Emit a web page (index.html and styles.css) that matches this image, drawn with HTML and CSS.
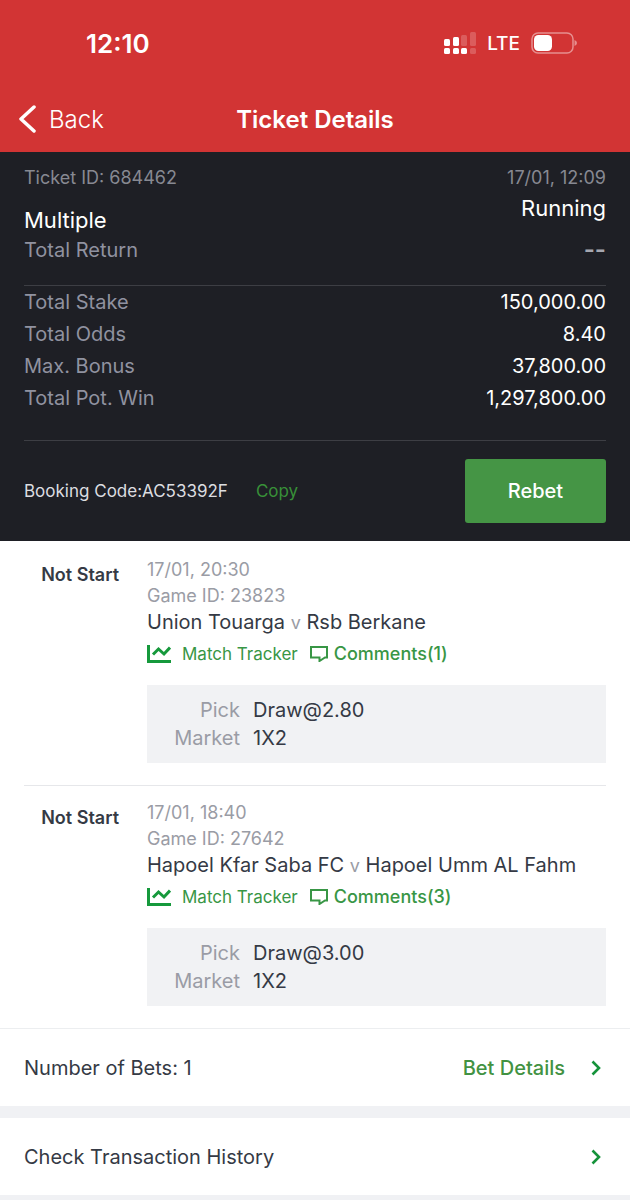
FILE: index.html
```html
<!DOCTYPE html>
<html lang="en">
<head>
<meta charset="utf-8">
<meta name="viewport" content="width=device-width, initial-scale=1">
<title>Ticket Details</title>
<link rel="stylesheet" href="styles.css">
</head>
<body>
<svg class="sprite" aria-hidden="true">
  <symbol id="chart" viewBox="0 0 24 18"><path d="M1.5 0v16.5H24M6 9.5l5.5-5.5 5.5 5 6-6.5" fill="none" stroke="currentColor" stroke-width="3"/></symbol>
  <symbol id="bubble" viewBox="0 0 18 16"><path d="M1 1h16v10.500h-2L9.500 15v-3.500H1z" fill="none" stroke="currentColor" stroke-width="2"/></symbol>
  <symbol id="chevron" viewBox="0 0 10 16"><path d="M1.500 1.500L8 8l-6.500 6.500" fill="none" stroke="currentColor" stroke-width="2.600"/></symbol>
</svg>
<header class="header">
  <div class="status">
    <span class="clock">12:10</span>
    <div class="indicators">
      <svg class="signal" viewBox="0 0 32 22" fill="currentColor" aria-hidden="true">
        <rect x="0" y="7" width="6" height="7" rx="1.500"/><rect x="0" y="16" width="6" height="6" rx="1.500"/>
        <rect x="9" y="5" width="6" height="9" rx="1.500"/><rect x="9" y="16" width="6" height="6" rx="1.500"/>
        <rect x="17" y="3" width="6" height="11" rx="1.500" opacity=".2"/><rect x="17" y="16" width="6" height="6" rx="1.500"/>
        <rect x="26" y="0" width="6" height="14" rx="1.500" opacity=".2"/><rect x="26" y="16" width="6" height="6" rx="1.500" opacity=".2"/>
      </svg>
      <span class="network">LTE</span>
      <svg class="battery" viewBox="0 0 46 22" aria-hidden="true">
        <rect x="1" y="1" width="41" height="20" rx="6" fill="none" stroke="#fff" stroke-opacity=".45" stroke-width="1.500"/>
        <rect x="3" y="3" width="18" height="16" rx="4.500" fill="#fff"/>
        <path d="M43.500 8q2.500 1 2.500 3t-2.500 3z" fill="#fff" fill-opacity=".45"/>
      </svg>
    </div>
  </div>
  <nav class="nav">
    <button class="back" type="button">
      <svg class="back-icon" viewBox="0 0 17 28" aria-hidden="true"><path d="M15 2L2 14l13 12" fill="none" stroke="currentColor" stroke-width="3.500" stroke-linecap="round" stroke-linejoin="round"/></svg>
      Back
    </button>
    <h1 class="title">Ticket Details</h1>
  </nav>
</header>
<main>
  <section class="summary">
    <div class="overview">
      <div class="overview-left">
        <span class="meta">Ticket ID: 684462</span>
        <span class="kind">Multiple</span>
        <span class="label">Total Return</span>
      </div>
      <div class="overview-right">
        <span class="meta">17/01, 12:09</span>
        <span class="state">Running</span>
        <span class="empty">--</span>
      </div>
    </div>
    <dl class="totals">
      <div class="total"><dt>Total Stake</dt><dd>150,000.00</dd></div>
      <div class="total"><dt>Total Odds</dt><dd>8.40</dd></div>
      <div class="total"><dt>Max. Bonus</dt><dd>37,800.00</dd></div>
      <div class="total"><dt>Total Pot. Win</dt><dd>1,297,800.00</dd></div>
    </dl>
    <div class="booking">
      <span>Booking Code:AC53392F</span>
      <button class="copy" type="button">Copy</button>
      <button class="rebet" type="button">Rebet</button>
    </div>
  </section>
  <ul class="matches">
    <li class="match">
      <strong class="match-state">Not Start</strong>
      <div class="match-body">
        <div class="match-meta">17/01, 20:30</div>
        <div class="match-meta">Game ID: 23823</div>
        <div class="teams">Union Touarga <span class="versus">v</span> Rsb Berkane</div>
        <div class="links">
          <a class="tracker" href="#"><svg class="chart"><use href="#chart"/></svg>Match Tracker</a>
          <a class="comments" href="#"><svg class="bubble"><use href="#bubble"/></svg>Comments(1)</a>
        </div>
        <dl class="pick">
          <dt>Pick</dt><dd>Draw@2.80</dd>
          <dt>Market</dt><dd>1X2</dd>
        </dl>
      </div>
    </li>
    <li class="match">
      <strong class="match-state">Not Start</strong>
      <div class="match-body">
        <div class="match-meta">17/01, 18:40</div>
        <div class="match-meta">Game ID: 27642</div>
        <div class="teams">Hapoel Kfar Saba FC <span class="versus">v</span> Hapoel Umm AL Fahm</div>
        <div class="links">
          <a class="tracker" href="#"><svg class="chart"><use href="#chart"/></svg>Match Tracker</a>
          <a class="comments" href="#"><svg class="bubble"><use href="#bubble"/></svg>Comments(3)</a>
        </div>
        <dl class="pick">
          <dt>Pick</dt><dd>Draw@3.00</dd>
          <dt>Market</dt><dd>1X2</dd>
        </dl>
      </div>
    </li>
  </ul>
  <div class="row bets">
    <span>Number of Bets: 1</span>
    <a class="details" href="#">Bet Details<svg class="chevron"><use href="#chevron"/></svg></a>
  </div>
  <a class="row history" href="#">Check Transaction History<svg class="chevron"><use href="#chevron"/></svg></a>
</main>
</body>
</html>
```
FILE: styles.css
```css
* { box-sizing: border-box; }
body {
  margin: 0;
  background: #f0f1f4;
  color: #353a45;
  font-family: Inter, "Liberation Sans", sans-serif;
  font-size: 20px;
}
button { padding: 0; border: 0; background: none; color: inherit; font: inherit; cursor: pointer; }
a { color: inherit; text-decoration: none; }
dl, dd, ul, h1 { margin: 0; padding: 0; }
ul { list-style: none; }
svg { flex: none; }
.sprite { position: absolute; width: 0; height: 0; }

.header { background: #d23434; color: #fff; }
.status {
  display: flex;
  align-items: center;
  justify-content: space-between;
  height: 86px;
  padding: 0 53px 0 86px;
}
.clock { font-size: 26px; font-weight: 600; }
.indicators { display: flex; align-items: center; gap: 11px; }
.signal { width: 32px; height: 22px; }
.battery { width: 46px; height: 22px; }
.network { font-size: 19px; font-weight: 500; }
.nav {
  display: grid;
  grid-template-columns: 1fr auto 1fr;
  align-items: center;
  height: 66px;
  padding: 0 19px;
}
.back { display: flex; align-items: center; gap: 13px; font-size: 24px; font-weight: 300; }
.back-icon { width: 17px; height: 28px; }
.title { font-size: 24px; font-weight: 600; }

.summary { padding: 14px 24px 18px; background: #1e1f25; color: #fff; }
.overview {
  display: flex;
  justify-content: space-between;
  padding-bottom: 20px;
  border-bottom: 1px solid #3d3e44;
  line-height: 30px;
}
.overview-left, .overview-right { display: flex; flex-direction: column; }
.overview-right { align-items: flex-end; }
.meta { color: #878992; font-size: 18px; line-height: 24px; }
.kind { margin-top: 15px; font-size: 22px; }
.state { margin: 3px 0 12px; font-size: 22px; }
.label, .total dt { color: #9092a0; }
.empty { color: #a5a7b0; font-size: 24px; font-weight: 600; }
.totals { padding-bottom: 26px; border-bottom: 1px solid #3d3e44; }
.total { display: flex; justify-content: space-between; line-height: 32px; }
.booking { display: flex; align-items: center; padding-top: 18px; color: #dcdde0; font-size: 17px; }
.copy { margin-left: 28px; color: #389038; }
.rebet {
  width: 141px;
  height: 64px;
  margin-left: auto;
  border-radius: 3px;
  background: #459545;
  color: #fff;
  font-size: 20px;
  font-weight: 500;
}

.matches { padding-top: 2px; background: #fff; border-bottom: 1px solid #eceef0; }
.match {
  display: flex;
  gap: 28px;
  margin: 0 24px;
  padding: 14px 0 22px;
}
.match + .match { border-top: 1px solid #e6e7ea; }
.match-state { width: 95px; font-size: 18px; font-weight: 600; line-height: 36px; text-align: right; }
.match-body { flex: 1; line-height: 26px; }
.match-meta { color: #9a9ca5; font-size: 18px; }
.versus { color: #9a9ca5; font-size: 18px; }
.links { display: flex; gap: 12px; margin: 5px 0 18px; color: #389645; }
.tracker, .comments { display: flex; align-items: center; }
.tracker { gap: 11px; font-size: 17px; }
.comments { gap: 6px; font-size: 18px; font-weight: 500; }
.chart { width: 24px; height: 18px; color: #16993c; }
.bubble { width: 18px; height: 16px; }
.pick {
  display: grid;
  grid-template-columns: 93px 1fr;
  column-gap: 13px;
  padding: 11px 0;
  background: #f1f2f4;
  line-height: 28px;
}
.pick dt { color: #9a9ca5; text-align: right; }

.row { display: flex; align-items: center; justify-content: space-between; height: 77px; padding: 0 29px 0 24px; background: #fff; }
.bets { margin-bottom: 12px; }
.details { display: flex; align-items: center; gap: 26px; color: #429242; font-weight: 500; }
.chevron { width: 10px; height: 16px; color: #15933a; }
```
